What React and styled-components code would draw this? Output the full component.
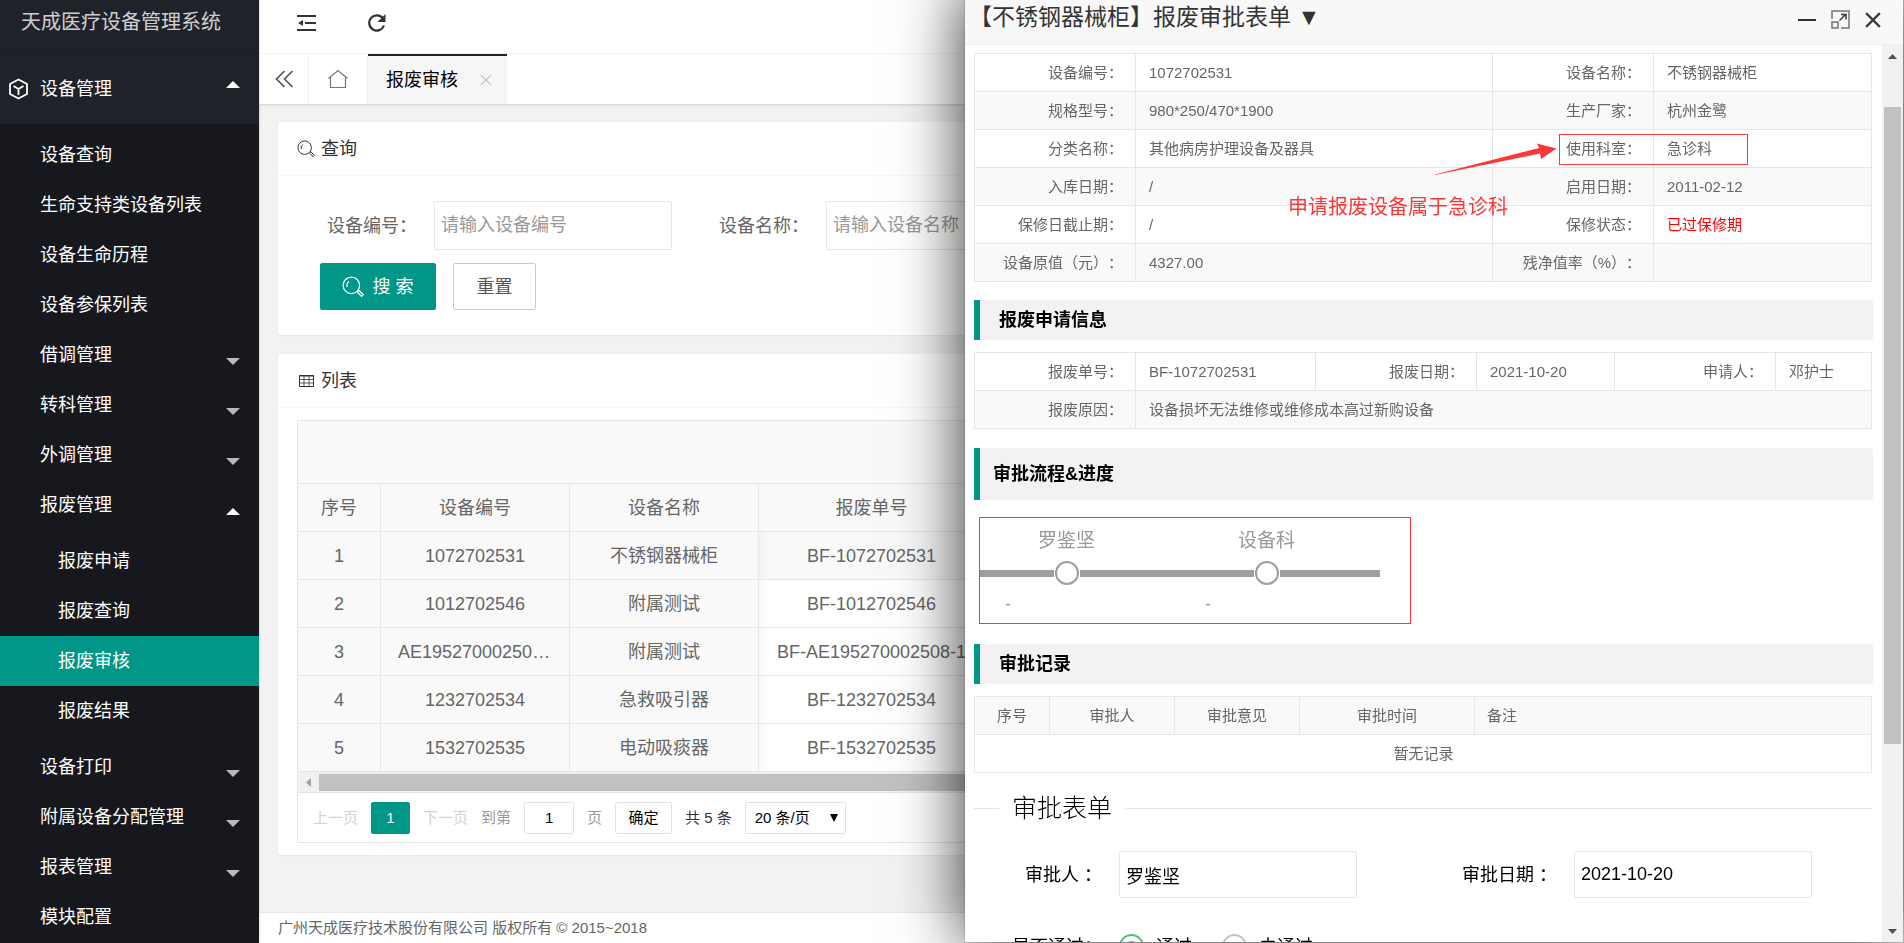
import React from 'react';
import styled, { createGlobalStyle, css } from 'styled-components';

const GREEN = '#009688';
const DARK = '#20222a';
const LINE = '#e6e6e6';
const STRIPE = '#f9f9f9';
const RED = '#fb3838';

const GlobalStyle = createGlobalStyle`
  *, *::before, *::after { box-sizing: border-box; }
  body {
    margin: 0;
    overflow: hidden;
    background: #f2f2f2;
    color: #666;
    font: 18px/24px "Liberation Sans", "Noto Sans CJK SC", sans-serif;
    text-spacing-trim: space-all;
  }
  button, input, select { font: inherit; color: inherit; margin: 0; }
  ul, ol { list-style: none; margin: 0; padding: 0; }
  a { color: inherit; text-decoration: none; }
`;

/* ---------- page frame ---------- */

const Shell = styled.div`
  display: flex;
  height: 100vh;
  overflow: hidden;
`;

const Sidebar = styled.nav`
  flex: none;
  width: 259px;
  overflow: hidden;
  background: #16181d;
  color: #fff;
  z-index: 1;
  box-shadow: 1px 0 2px rgba(0, 0, 0, 0.1);
`;

const Brand = styled.div`
  height: 53px;
  padding: 6px 0 0 21px;
  background: ${DARK};
  border-bottom: 1px solid #1b1d24;
  color: rgba(255, 255, 255, 0.8);
  font-size: 20px;
  line-height: 32px;
`;

const MenuHead = styled.a`
  display: flex;
  align-items: center;
  height: 71px;
  padding: 0 19px 0 8px;
  gap: 11px;
  background: ${DARK};
`;

const SubMenu = styled.ul`
  padding: 6px 0;
`;

const MenuLink = styled.a`
  display: flex;
  align-items: center;
  height: 50px;
  padding: 0 19px 0 ${(p) => (p.$nested ? 58 : 40)}px;
  background: ${(p) => (p.$active ? GREEN : 'transparent')};
`;

const Caret = styled.span`
  margin-left: auto;
  margin-top: ${(p) => (p.$head ? 0 : 12)}px;
  margin-bottom: ${(p) => (p.$head ? 8 : 0)}px;
  border: 7px solid transparent;
  border-top-width: ${(p) => (p.$open ? 0 : 7)}px;
  border-bottom-width: ${(p) => (p.$open ? 7 : 0)}px;
  border-top-color: rgba(255, 255, 255, 0.7);
  border-bottom-color: #fff;
`;

const Main = styled.div`
  flex: 1;
  min-width: 0;
  display: flex;
  flex-direction: column;
`;

const TopBar = styled.header`
  display: flex;
  align-items: center;
  gap: 51px;
  height: 54px;
  padding: 0 36px 8px;
  background: #fff;
  border-bottom: 1px solid #f6f6f6;
`;

const IconButton = styled.button`
  display: flex;
  padding: 0;
  border: 0;
  background: none;
  color: ${(p) => p.$color || '#333'};
  svg { display: block; }
`;

const TabBar = styled.div`
  display: flex;
  height: 50px;
  background: #fff;
  box-shadow: 0 1px 2px rgba(0, 0, 0, 0.15);
`;

const TabTool = styled.button`
  display: flex;
  align-items: center;
  justify-content: center;
  width: ${(p) => p.$width}px;
  padding: 0;
  border: 0;
  border-right: 1px solid #f2f2f2;
  background: none;
  color: ${(p) => p.$color};
`;

const Tab = styled.div`
  display: flex;
  align-items: center;
  gap: 22px;
  padding: 0 15px 0 18px;
  background: #f6f6f6;
  border-top: 2px solid ${DARK};
  color: #000;
`;

const Content = styled.main`
  flex: 1;
  display: flex;
  flex-direction: column;
  gap: 19px;
  padding: 18px 19px;
`;

const Footer = styled.footer`
  height: 31px;
  padding-left: 19px;
  background: #fff;
  border-top: 1px solid #e8e8e8;
  font-size: 15px;
  line-height: 30px;
`;

/* ---------- cards ---------- */

const Card = styled.section`
  background: #fff;
  border-radius: 2px;
  box-shadow: 0 1px 2px rgba(0, 0, 0, 0.05);
`;

const CardTitle = styled.h2`
  display: flex;
  align-items: center;
  gap: 6px;
  height: 54px;
  margin: 0;
  padding: 0 19px;
  border-bottom: 1px solid #f6f6f6;
  color: #333;
  font-size: 18px;
  font-weight: 400;
`;

const SearchForm = styled.form`
  display: flex;
  flex-direction: column;
  gap: 13px;
  padding: 25px 42px;
`;

const FieldLine = styled.div`
  display: flex;
  gap: 40px;
`;

const Field = styled.div`
  display: flex;
  align-items: center;
`;

const FieldLabel = styled.label`
  width: ${(p) => p.$width}px;
  padding-right: 17px;
  text-align: right;
  white-space: nowrap;
`;

const TextInput = styled.input`
  width: 238px;
  height: ${(p) => p.$height}px;
  padding: 0 6px;
  border: 1px solid ${LINE};
  border-radius: 2px;
  background: #fff;
  &::placeholder { color: #999; opacity: 1; }
`;

const ButtonLine = styled.div`
  display: flex;
  gap: 17px;
`;

const FormButton = styled.button`
  display: flex;
  align-items: center;
  justify-content: center;
  gap: 8px;
  width: ${(p) => (p.$primary ? 116 : 83)}px;
  height: 47px;
  padding: 0;
  border: 1px solid ${(p) => (p.$primary ? GREEN : '#c9c9c9')};
  border-radius: 2px;
  background: ${(p) => (p.$primary ? GREEN : '#fff')};
  color: ${(p) => (p.$primary ? '#fff' : '#555')};
`;

/* ---------- list ---------- */

const ListBody = styled.div`
  padding: 12px 19px;
`;

const ListFrame = styled.div`
  border: 1px solid ${LINE};
`;

const ListToolbar = styled.div`
  height: 63px;
  background: ${STRIPE};
  border-bottom: 1px solid ${LINE};
`;

const ListTable = styled.table`
  width: 100%;
  table-layout: fixed;
  border-collapse: separate;
  border-spacing: 0;
`;

const cell = css`
  height: 48px;
  padding: 0 17px;
  border-right: 1px solid ${LINE};
  border-bottom: 1px solid ${LINE};
  font-weight: 400;
  text-align: center;
  overflow: hidden;
  text-overflow: ellipsis;
  white-space: nowrap;
`;

const ListHead = styled.th`
  ${cell}
  background: ${STRIPE};
`;

const ListCell = styled.td`
  ${cell}
  background-color: ${(p) => (p.$pinned || p.$shaded ? STRIPE : '#fff')};
  ${(p) => p.$edge && 'background-image: linear-gradient(to right, rgba(0, 0, 0, 0.03), transparent 10px);'}
`;

const HScroll = styled.div`
  display: flex;
  align-items: center;
  height: 21px;
  padding-left: 8px;
  gap: 8px;
  background: #f1f1f1;
  border-bottom: 1px solid ${LINE};
`;

const HThumb = styled.div`
  flex: 1;
  height: 17px;
  margin-right: 120px;
  background: #c1c1c1;
`;

const Pager = styled.div`
  display: flex;
  align-items: center;
  height: 49px;
  padding-left: 15px;
  gap: 13px;
  color: #333;
  font-size: 15px;
`;

const PagerText = styled.span`
  color: ${(p) => p.$color};
`;

const pagerBox = css`
  height: 32px;
  border: 1px solid #e2e2e2;
  border-radius: 2px;
  background: #fff;
  color: #000;
`;

const CurrentPage = styled.button`
  ${pagerBox}
  width: 39px;
  padding: 0;
  border-color: ${GREEN};
  background: ${GREEN};
  color: #fff;
`;

const PageInput = styled.input`
  ${pagerBox}
  width: 50px;
  text-align: center;
`;

const PagerButton = styled.button`
  ${pagerBox}
  width: 57px;
  padding: 0;
`;

const SelectWrap = styled.span`
  position: relative;
  display: flex;
  svg {
    position: absolute;
    right: 8px;
    top: 12px;
    pointer-events: none;
  }
`;

const PageSelect = styled.select`
  ${pagerBox}
  appearance: none;
  width: 101px;
  padding: 0 9px;
`;

/* ---------- approval window ---------- */

const Dialog = styled.section`
  position: fixed;
  z-index: 10;
  top: -12px;
  right: 0;
  bottom: 0;
  width: calc(50vw - 12px);
  display: flex;
  flex-direction: column;
  border: 1px solid rgba(0, 0, 0, 0.1);
  background: #fff;
  background-clip: padding-box;
  box-shadow: 0 0 62px rgba(0, 0, 0, 0.8);
`;

const DialogHead = styled.header`
  flex: none;
  display: flex;
  align-items: center;
  justify-content: space-between;
  height: 56px;
  padding: 0 22px 0 4px;
  background: #f8f8f8;
  border-bottom: 1px solid #eee;
`;

const DialogTitle = styled.h1`
  margin: 0;
  color: #333;
  font-size: 23px;
  font-weight: 400;
  line-height: 32px;
`;

const WindowTools = styled.div`
  display: flex;
  align-items: center;
  gap: 15px;
  padding-top: 6px;
`;

const DialogBody = styled.div`
  flex: 1;
  min-height: 0;
  display: flex;
`;

const DialogContent = styled.div`
  flex: 1;
  min-width: 0;
  overflow: hidden;
  padding: 8px 9px 0;
`;

const VScroll = styled.div`
  flex: none;
  display: flex;
  flex-direction: column;
  align-items: center;
  justify-content: space-between;
  width: 21px;
  padding: 9px 2px 8px;
  background: #f1f1f1;
`;

const VThumb = styled.div`
  width: 17px;
  height: 637px;
  margin: 0 0 138px;
  background: #c1c1c1;
`;

const InfoWrap = styled.div`
  position: relative;
`;

const InfoTable = styled.table`
  width: calc(100% - 1px);
  table-layout: fixed;
  border-collapse: collapse;
  font-size: 15px;
  tbody tr:nth-child(even) { background: ${STRIPE}; }
`;

const infoCell = css`
  height: 38px;
  padding: 0 12px;
  border: 1px solid ${LINE};
  font-weight: 400;
  line-height: 20px;
  white-space: nowrap;
`;

const InfoLabel = styled.th`
  ${infoCell}
  text-align: right;
`;

const InfoValue = styled.td`
  ${infoCell}
  padding-left: 13px;
  text-align: ${(p) => (p.$center ? 'center' : 'left')};
  color: ${(p) => (p.$alert ? '#f00' : 'inherit')};
`;

const RecordHead = styled.th`
  ${infoCell}
  text-align: ${(p) => (p.$left ? 'left' : 'center')};
  background: ${STRIPE};
`;

const SectionTitle = styled.h2`
  margin: ${(p) => (p.$tall ? 19 : 18)}px 0 12px;
  padding-left: ${(p) => (p.$tall ? 13 : 19)}px;
  border-left: 6px solid ${GREEN};
  border-radius: 0 2px 2px 0;
  background: #f2f2f2;
  color: #000;
  font-size: 18px;
  font-weight: 700;
  line-height: ${(p) => (p.$tall ? 52 : 40)}px;
`;

const Highlight = styled.div`
  position: absolute;
  top: 81px;
  right: 125px;
  width: 189px;
  height: 31px;
  border: 1px solid ${RED};
`;

const Arrow = styled.svg`
  position: absolute;
  top: 90px;
  right: 316px;
`;

const Note = styled.p`
  position: absolute;
  top: 140px;
  right: 365px;
  margin: 0;
  color: ${RED};
  font-size: 20px;
  line-height: 28px;
`;

const Steps = styled.ol`
  display: flex;
  width: 432px;
  height: 107px;
  margin: 17px 0 20px 5px;
  padding-top: 11px;
  border: 1px solid ${RED};
  color: #999;
`;

const Step = styled.li`
  width: 200px;
`;

const StepName = styled.div`
  padding-right: 27px;
  text-align: center;
  font-size: 19px;
`;

const StepTrack = styled.div`
  display: flex;
  align-items: center;
  gap: 1px;
  margin: 8px 0 7px;
`;

const StepBar = styled.span`
  flex: ${(p) => (p.$lead ? '0 0 74px' : '1')};
  height: 7px;
  background: #9f9d9d;
`;

const StepDot = styled.span`
  width: 24px;
  height: 24px;
  border: 2px solid #9f9d9d;
  border-radius: 50%;
  background: #fff;
`;

const StepNote = styled.div`
  padding-left: 25px;
`;

const ApprovalForm = styled.fieldset`
  min-width: 0;
  margin: 16px 0 0;
  padding: 0;
  border: 0;
  border-top: 1px solid ${LINE};
  color: #000;
`;

const Legend = styled.legend`
  margin-left: 25px;
  padding: 0 13px;
  font-size: 25px;
  font-weight: 300;
  line-height: 38px;
`;

const ApprovalGrid = styled.div`
  display: grid;
  grid-template-columns: 1fr 444px;
  row-gap: 25px;
  padding-top: 24px;
`;

const RadioGroup = styled.div`
  display: flex;
  align-items: center;
  height: 47px;
  gap: 30px;
`;

const RadioLabel = styled.label`
  display: flex;
  align-items: center;
  gap: 12px;
`;

const Radio = styled.input`
  appearance: none;
  width: 25px;
  height: 25px;
  border: 2px solid #c2c2c2;
  border-radius: 50%;
  background: #fff;
  &:checked {
    border-color: #5fb878;
    background: radial-gradient(circle, #5fb878 5px, #fff 6px);
  }
`;

/* ---------- drawings ---------- */

const CubeIcon = () => (
  <svg width="21" height="22" viewBox="0 0 21 22" fill="none" stroke="currentColor" strokeWidth="1.800">
    <path d="M10.500 1.500 19 6v10l-8.500 4.500L2 16V6z" strokeLinejoin="round" />
    <path d="M5.500 8l5 3 5-3M10.500 11v6" />
  </svg>
);

const FoldIcon = () => (
  <svg width="21" height="18" viewBox="0 0 21 18" fill="currentColor">
    <path d="M2 1h19v2H2zM10 8h11v2H10zM2 15h19v2H2zM8 6v6L3 9z" />
  </svg>
);

const RefreshIcon = () => (
  <svg width="20" height="19" viewBox="0 0 20 19" fill="none">
    <path d="M16 5.500A7.600 7.600 0 1 0 17 12.500" stroke="currentColor" strokeWidth="2.200" />
    <path d="M18.500 1v8h-8z" fill="currentColor" />
  </svg>
);

const BackIcon = () => (
  <svg width="20" height="18" viewBox="0 0 20 18" fill="none" stroke="currentColor" strokeWidth="1.700">
    <path d="M10.500 1 2.500 9l8 8M18.500 1l-8 8 8 8" />
  </svg>
);

const HomeIcon = () => (
  <svg width="22" height="20" viewBox="0 0 22 20" fill="none" stroke="currentColor" strokeWidth="1.200">
    <path d="M1.500 9.500 11 1.500l9.500 8M3.500 8.500v10h15v-10" />
  </svg>
);

const CrossIcon = ({ size, width }) => (
  <svg width={size} height={size} viewBox="0 0 14 14" fill="none" stroke="currentColor" strokeWidth={width}>
    <path d="M1 1l12 12M13 1 1 13" />
  </svg>
);

const SearchIcon = ({ size }) => (
  <svg width={size} height={size} viewBox="0 0 20 20" fill="none" stroke="currentColor" strokeWidth="1.100">
    <circle cx="8.500" cy="8.500" r="7.500" />
    <path d="M4.800 10a4.500 4.500 0 0 1 1.500-5" />
    <path d="M13.800 14.500l4 4 1.500-1.500-4-4z" />
  </svg>
);

const GridIcon = () => (
  <svg width="18" height="14" viewBox="0 0 18 14" fill="none" stroke="currentColor">
    <path d="M2.500 1.500h14v11h-14z M2 2h15" />
    <path d="M2.500 5.500h14M2.500 9h14M7 2v11M12 2v11" strokeWidth="0.800" />
  </svg>
);

const MaximizeIcon = () => (
  <svg width="19" height="19" viewBox="0 0 19 19" fill="none" stroke="currentColor" strokeWidth="1.500">
    <path d="M1 9V1h17v17h-8" stroke="#72727d" />
    <path d="M1 12h6v6H1z" stroke="#72727d" />
    <path d="M8.500 10.500 14 5M10 4.500h5v5" />
  </svg>
);

const Triangle = ({ dir, color }) => {
  const shapes = { up: 'M0 5h9L4.500 0z', down: 'M0 0h9L4.500 5z' };
  return (
    <svg width="9" height="5" viewBox="0 0 9 5" fill={color}>
      <path d={shapes[dir]} />
    </svg>
  );
};

/* ---------- data ---------- */

const MENU = [
  { text: '设备查询' },
  { text: '生命支持类设备列表' },
  { text: '设备生命历程' },
  { text: '设备参保列表' },
  { text: '借调管理', group: true },
  { text: '转科管理', group: true },
  { text: '外调管理', group: true },
  {
    text: '报废管理',
    group: true,
    children: ['报废申请', '报废查询', '报废审核', '报废结果'],
  },
  { text: '设备打印', group: true },
  { text: '附属设备分配管理', group: true },
  { text: '报表管理', group: true },
  { text: '模块配置' },
];

const ROWS = [
  ['1', '1072702531', '不锈钢器械柜', 'BF-1072702531'],
  ['2', '1012702546', '附属测试', 'BF-1012702546'],
  ['3', 'AE195270002508-1', '附属测试', 'BF-AE195270002508-1'],
  ['4', '1232702534', '急救吸引器', 'BF-1232702534'],
  ['5', '1532702535', '电动吸痰器', 'BF-1532702535'],
];

const DEVICE = [
  ['设备编号：', '1072702531', '设备名称：', '不锈钢器械柜'],
  ['规格型号：', '980*250/470*1900', '生产厂家：', '杭州金鹭'],
  ['分类名称：', '其他病房护理设备及器具', '使用科室：', '急诊科'],
  ['入库日期：', '/', '启用日期：', '2011-02-12'],
  ['保修日截止期：', '/', '保修状态：', '已过保修期'],
  ['设备原值（元）：', '4327.00', '残净值率（%）：', ''],
];

const Columns = ({ widths }) => (
  <colgroup>
    {widths.map((w, i) => (
      <col key={i} width={w || undefined} />
    ))}
  </colgroup>
);

/* ---------- parts ---------- */

const SideMenu = () => (
  <Sidebar>
    <Brand>天成医疗设备管理系统</Brand>
    <MenuHead href="#devices">
      <CubeIcon />
      设备管理
      <Caret $open $head />
    </MenuHead>
    <SubMenu>
      {MENU.map((item) => (
        <li key={item.text}>
          <MenuLink href="#menu">
            {item.text}
            {item.group && <Caret $open={!!item.children} />}
          </MenuLink>
          {item.children && (
            <SubMenu>
              {item.children.map((child) => (
                <li key={child}>
                  <MenuLink href="#menu" $nested $active={child === '报废审核'}>
                    {child}
                  </MenuLink>
                </li>
              ))}
            </SubMenu>
          )}
        </li>
      ))}
    </SubMenu>
  </Sidebar>
);

const SearchCard = () => (
  <Card>
    <CardTitle>
      <SearchIcon size={18} />
      查询
    </CardTitle>
    <SearchForm onSubmit={(e) => e.preventDefault()}>
      <FieldLine>
        <Field>
          <FieldLabel $width={114} htmlFor="code">设备编号：</FieldLabel>
          <TextInput $height={49} id="code" placeholder="请输入设备编号" />
        </Field>
        <Field>
          <FieldLabel $width={114} htmlFor="name">设备名称：</FieldLabel>
          <TextInput $height={49} id="name" placeholder="请输入设备名称" />
        </Field>
      </FieldLine>
      <ButtonLine>
        <FormButton $primary type="submit">
          <SearchIcon size={22} />
          搜 索
        </FormButton>
        <FormButton type="reset">重置</FormButton>
      </ButtonLine>
    </SearchForm>
  </Card>
);

const ListCard = () => (
  <Card>
    <CardTitle>
      <GridIcon />
      列表
    </CardTitle>
    <ListBody>
      <ListFrame>
        <ListToolbar />
        <ListTable>
          <Columns widths={[83, 189, 189, 226, 0]} />
          <thead>
            <tr>
              <ListHead>序号</ListHead>
              <ListHead>设备编号</ListHead>
              <ListHead>设备名称</ListHead>
              <ListHead>报废单号</ListHead>
              <ListHead />
            </tr>
          </thead>
          <tbody>
            {ROWS.map((row, r) => (
              <tr key={row[0]}>
                {row.map((text, c) => (
                  <ListCell key={c} $pinned={c < 3} $shaded={r === 0} $edge={c === 3}>
                    {text}
                  </ListCell>
                ))}
                <ListCell $shaded={r === 0} />
              </tr>
            ))}
          </tbody>
        </ListTable>
        <HScroll>
          <svg width="5" height="9" viewBox="0 0 5 9" fill="#a0a0a0">
            <path d="M5 0v9L0 4.500z" />
          </svg>
          <HThumb />
        </HScroll>
        <Pager>
          <PagerText $color="#d2d2d2">上一页</PagerText>
          <CurrentPage type="button">1</CurrentPage>
          <PagerText $color="#d2d2d2">下一页</PagerText>
          <PagerText $color="#999" as="label" htmlFor="page">到第</PagerText>
          <PageInput id="page" defaultValue="1" />
          <PagerText $color="#999">页</PagerText>
          <PagerButton type="button">确定</PagerButton>
          <span>共 5 条</span>
          <SelectWrap>
            <PageSelect aria-label="每页条数" defaultValue="20">
              <option value="20">20 条/页</option>
            </PageSelect>
            <svg width="8" height="8" viewBox="0 0 8 8">
              <path d="M0 0h8L4 8z" />
            </svg>
          </SelectWrap>
        </Pager>
      </ListFrame>
    </ListBody>
  </Card>
);

const DeviceInfo = () => (
  <InfoWrap>
    <InfoTable>
      <Columns widths={[161, 0, 161, 218]} />
      <tbody>
        {DEVICE.map(([labelA, valueA, labelB, valueB]) => (
          <tr key={labelA}>
            <InfoLabel scope="row">{labelA}</InfoLabel>
            <InfoValue>{valueA}</InfoValue>
            <InfoLabel scope="row">{labelB}</InfoLabel>
            <InfoValue $alert={labelB === '保修状态：'}>{valueB}</InfoValue>
          </tr>
        ))}
      </tbody>
    </InfoTable>
    <Highlight />
    <Arrow width="122" height="34" viewBox="0 0 122 34" fill={RED}>
      <path d="M0 31.500 104 5l-2-4.500 19.500 5L106 16l-1-5.500L1 31.800z" />
    </Arrow>
    <Note>申请报废设备属于急诊科</Note>
  </InfoWrap>
);

const ApprovalDialog = () => (
  <Dialog role="dialog" aria-labelledby="dialog-title">
    <DialogHead>
      <DialogTitle id="dialog-title">【不锈钢器械柜】报废审批表单 ▼</DialogTitle>
      <WindowTools>
        <IconButton type="button" aria-label="最小化" $color="#2e2d3c">
          <svg width="18" height="19" viewBox="0 0 18 19" fill="currentColor">
            <path d="M0 9h18v2H0z" />
          </svg>
        </IconButton>
        <IconButton type="button" aria-label="最大化" $color="#3b3b48">
          <MaximizeIcon />
        </IconButton>
        <IconButton type="button" aria-label="关闭" $color="#3b3b48">
          <CrossIcon size={16} width={2} />
        </IconButton>
      </WindowTools>
    </DialogHead>
    <DialogBody>
      <DialogContent>
        <DeviceInfo />

        <SectionTitle>报废申请信息</SectionTitle>
        <InfoTable>
          <Columns widths={[161, 0, 161, 138, 161, 96]} />
          <tbody>
            <tr>
              <InfoLabel scope="row">报废单号：</InfoLabel>
              <InfoValue>BF-1072702531</InfoValue>
              <InfoLabel scope="row">报废日期：</InfoLabel>
              <InfoValue>2021-10-20</InfoValue>
              <InfoLabel scope="row">申请人：</InfoLabel>
              <InfoValue>邓护士</InfoValue>
            </tr>
            <tr>
              <InfoLabel scope="row">报废原因：</InfoLabel>
              <InfoValue colSpan={5}>设备损坏无法维修或维修成本高过新购设备</InfoValue>
            </tr>
          </tbody>
        </InfoTable>

        <SectionTitle $tall>审批流程&amp;进度</SectionTitle>
        <Steps>
          {['罗鉴坚', '设备科'].map((name) => (
            <Step key={name}>
              <StepName>{name}</StepName>
              <StepTrack>
                <StepBar $lead />
                <StepDot />
                <StepBar />
              </StepTrack>
              <StepNote>-</StepNote>
            </Step>
          ))}
        </Steps>

        <SectionTitle>审批记录</SectionTitle>
        <InfoTable>
          <Columns widths={[75, 125, 125, 175, 0]} />
          <thead>
            <tr>
              <RecordHead>序号</RecordHead>
              <RecordHead>审批人</RecordHead>
              <RecordHead>审批意见</RecordHead>
              <RecordHead>审批时间</RecordHead>
              <RecordHead $left>备注</RecordHead>
            </tr>
          </thead>
          <tbody>
            <tr>
              <InfoValue colSpan={5} $center>暂无记录</InfoValue>
            </tr>
          </tbody>
        </InfoTable>

        <ApprovalForm>
          <Legend>审批表单</Legend>
          <ApprovalGrid>
            <Field>
              <FieldLabel $width={145} htmlFor="approver">审批人 ：</FieldLabel>
              <TextInput $height={47} id="approver" defaultValue="罗鉴坚" />
            </Field>
            <Field>
              <FieldLabel $width={145} htmlFor="date">审批日期 ：</FieldLabel>
              <TextInput $height={47} id="date" defaultValue="2021-10-20" />
            </Field>
            <Field>
              <FieldLabel $width={145} as="span">是否通过：</FieldLabel>
              <RadioGroup role="radiogroup" aria-label="是否通过">
                <RadioLabel>
                  <Radio type="radio" name="pass" defaultChecked />
                  通过
                </RadioLabel>
                <RadioLabel>
                  <Radio type="radio" name="pass" />
                  未通过
                </RadioLabel>
              </RadioGroup>
            </Field>
          </ApprovalGrid>
        </ApprovalForm>
      </DialogContent>
      <VScroll>
        <Triangle dir="up" color="#505050" />
        <VThumb />
        <Triangle dir="down" color="#505050" />
      </VScroll>
    </DialogBody>
  </Dialog>
);

export default function App() {
  return (
    <>
      <GlobalStyle />
      <Shell>
        <SideMenu />
        <Main>
          <TopBar>
            <IconButton type="button" aria-label="收起菜单"><FoldIcon /></IconButton>
            <IconButton type="button" aria-label="刷新"><RefreshIcon /></IconButton>
          </TopBar>
          <TabBar>
            <TabTool type="button" aria-label="向左" $width={50} $color="#555"><BackIcon /></TabTool>
            <TabTool type="button" aria-label="主页" $width={59} $color="#777"><HomeIcon /></TabTool>
            <Tab>
              报废审核
              <IconButton type="button" aria-label="关闭标签" $color="#c2c2c2">
                <CrossIcon size={12} width={1.5} />
              </IconButton>
            </Tab>
          </TabBar>
          <Content>
            <SearchCard />
            <ListCard />
          </Content>
          <Footer>广州天成医疗技术股份有限公司 版权所有 © 2015~2018</Footer>
        </Main>
      </Shell>
      <ApprovalDialog />
    </>
  );
}
